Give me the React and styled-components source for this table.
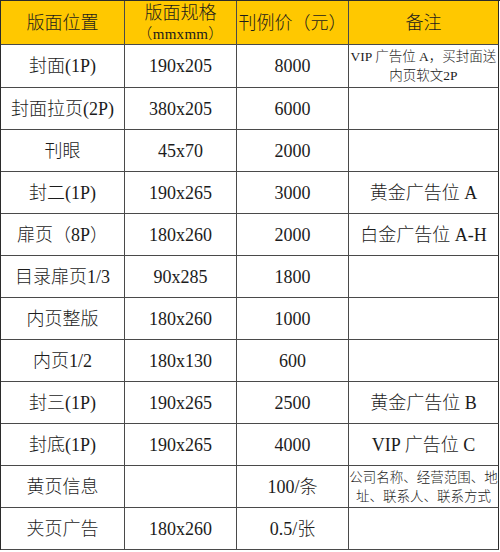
import React from "react";
import styled, { createGlobalStyle } from "styled-components";

const rows = [
  { pos: "封面(1P)", size: "190x205", price: "8000", note: ["VIP 广告位 A，买封面送", "内页软文2P"] },
  { pos: "封面拉页(2P)", size: "380x205", price: "6000" },
  { pos: "刊眼", size: "45x70", price: "2000" },
  { pos: "封二(1P)", size: "190x265", price: "3000", note: "黄金广告位 A" },
  { pos: "扉页（8P）", size: "180x260", price: "2000", note: "白金广告位 A-H" },
  { pos: "目录扉页1/3", size: "90x285", price: "1800" },
  { pos: "内页整版", size: "180x260", price: "1000" },
  { pos: "内页1/2", size: "180x130", price: "600" },
  { pos: "封三(1P)", size: "190x265", price: "2500", note: "黄金广告位 B" },
  { pos: "封底(1P)", size: "190x265", price: "4000", note: "VIP 广告位 C" },
  { pos: "黄页信息", size: "", price: "100/条", note: ["公司名称、经营范围、地", "址、联系人、联系方式"] },
  { pos: "夹页广告", size: "180x260", price: "0.5/张" },
];

const Global = createGlobalStyle`
  body {
    margin: 0;
    background: #fff;
  }
`;

const Table = styled.div`
  display: grid;
  grid-template-columns: 124px 112px 112px 150px;
  grid-template-rows: 44px 43px repeat(11, 42px);
  width: 499px;
  border-top: 1px solid #2b2b2b;
  border-left: 1px solid #2b2b2b;
  font-family: "Liberation Serif", "Noto Sans CJK SC", serif;
  color: #1c1c1c;
`;

const Cell = styled.div`
  box-sizing: border-box;
  display: flex;
  flex-direction: column;
  align-items: center;
  justify-content: center;
  border-right: 1px solid ${(p) => (p.$last ? "#2b2b2b" : "#4a4a4a")};
  border-bottom: 1px solid #4a4a4a;
  background: ${(p) => (p.$head ? "#ffc800" : "#fff")};
  font-size: ${(p) => (p.$small ? "13.5px" : "18px")};
  line-height: ${(p) => (p.$small ? "19px" : "22px")};
  font-weight: 300;
  white-space: nowrap;
  text-align: center;
  overflow: hidden;
`;

const Sub = styled.span`
  font-size: 15px;
  line-height: 20px;
  letter-spacing: 0.3px;
`;

const Note = ({ note }) => {
  if (Array.isArray(note)) {
    return (
      <Cell $small $last>
        {note.map((line) => (
          <span key={line}>{line}</span>
        ))}
      </Cell>
    );
  }
  return <Cell $last>{note || ""}</Cell>;
};

export default function App() {
  return (
    <>
      <Global />
      <Table>
        <Cell $head>版面位置</Cell>
        <Cell $head>
          <span>版面规格</span>
          <Sub>（mmxmm）</Sub>
        </Cell>
        <Cell $head>刊例价（元）</Cell>
        <Cell $head $last>备注</Cell>
        {rows.map((r) => (
          <React.Fragment key={r.pos}>
            <Cell>{r.pos}</Cell>
            <Cell>{r.size}</Cell>
            <Cell>{r.price}</Cell>
            <Note note={r.note} />
          </React.Fragment>
        ))}
      </Table>
    </>
  );
}
